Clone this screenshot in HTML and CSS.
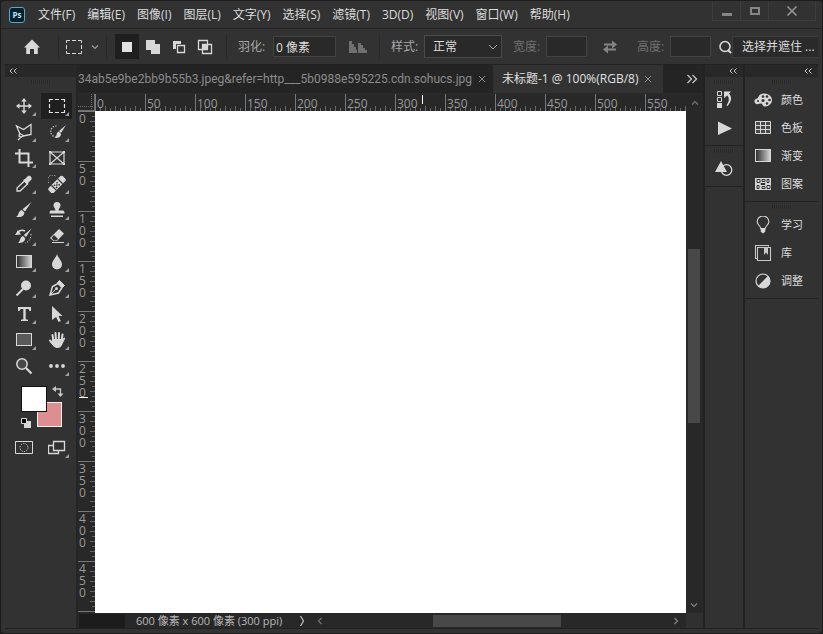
FILE: index.html
```html
<!DOCTYPE html>
<html lang="zh-CN">
<head>
<meta charset="utf-8">
<title>未标题-1</title>
<link rel="stylesheet" href="styles.css">
</head>
<body>
<header class="menubar">
  <svg class="logo" viewBox="0 0 16 16"><rect x="0.5" y="0.5" width="15" height="15" rx="2.5" fill="#04202e" stroke="#5aa9c4"/><text x="8" y="11" text-anchor="middle">Ps</text></svg>
  <nav class="menus">
    <button>文件(F)</button><button>编辑(E)</button><button>图像(I)</button><button>图层(L)</button><button>文字(Y)</button><button>选择(S)</button><button>滤镜(T)</button><button>3D(D)</button><button>视图(V)</button><button>窗口(W)</button><button>帮助(H)</button>
  </nav>
  <div class="winbtns">
    <button aria-label="最小化"><svg viewBox="0 0 12 12"><path d="M1 8h10v3H1z" fill="#858585"/></svg></button>
    <button aria-label="最大化"><svg viewBox="0 0 12 12"><path d="M2 3h8v6H2z" fill="none" stroke="#858585" stroke-width="2"/></svg></button>
    <button class="close" aria-label="关闭"><svg viewBox="0 0 12 12"><path d="M1.500 1.500l9 9M10.500 1.500l-9 9" stroke="#959595" stroke-width="1.600"/></svg></button>
  </div>
</header>

<section class="options">
  <button class="home" aria-label="主页"><svg viewBox="0 0 18 18"><path d="M9 1.500L17 9.500h-2.200V16H11v-5H7v5H3.200V9.500H1z" fill="#d8d8d8"/></svg></button>
  <button class="preset" aria-label="矩形选框"><svg viewBox="0 0 18 18"><path d="M1.500 5V2.500H5M7 2.500h4M13 2.500h3.500V5M16.500 7v4M16.500 13v2.500H13M11 15.500H7M5 15.500H1.500V13M1.500 11V7" fill="none" stroke="#d8d8d8"/></svg><svg class="chev" viewBox="0 0 8 8"><path d="M1 2.500l3 3 3-3" fill="none" stroke="#9a9a9a" stroke-width="1.200"/></svg></button>
  <div class="modes">
    <button class="on" aria-label="新选区"><svg viewBox="0 0 18 18"><path d="M4 4h10v10H4z" fill="#e0e0e0"/></svg></button>
    <button aria-label="添加到选区"><svg viewBox="0 0 18 18"><path d="M2 2h9v4h5v10H7v-4H2z" fill="#d8d8d8"/></svg></button>
    <button aria-label="从选区减去"><svg viewBox="0 0 18 18"><path d="M3 3h8v3H6v5H3z" fill="#d8d8d8"/><path d="M7.500 7.500h7v7h-7z" fill="none" stroke="#d8d8d8" stroke-width="1.300"/></svg></button>
    <button aria-label="与选区交叉"><svg viewBox="0 0 18 18"><path d="M2.500 2.500h9v9h-9zM6.500 6.500h9v9h-9z" fill="none" stroke="#d8d8d8" stroke-width="1.300"/><path d="M7 7h4v4H7z" fill="#d8d8d8"/></svg></button>
  </div>
  <div class="field feather"><label for="feather">羽化:</label><input id="feather" value="0 像素"></div>
  <button class="alias" aria-label="消除锯齿"><svg viewBox="0 0 20 14"><path d="M1 1h3v3h2v3h2v3h1v3H1zM10 3h3v2h2v3h2v2h2v3h-9z" fill="#707070"/></svg></button>
  <div class="field style"><label for="style">样式:</label><select id="style"><option>正常</option></select></div>
  <div class="field size off"><label for="w">宽度:</label><input id="w" disabled></div>
  <button class="swap" aria-label="互换"><svg viewBox="0 0 16 14"><path d="M2 3.500h8V.5l5 4-5 4v-3H2zM14 8.500H6v-3l-5 4 5 4v-3h8z" fill="#858585"/></svg></button>
  <div class="field size off"><label for="h">高度:</label><input id="h" disabled></div>
  <button class="search" aria-label="搜索"><svg viewBox="0 0 14 16"><circle cx="7" cy="7.500" r="5" fill="none" stroke="#dcdcdc" stroke-width="1.500"/><path d="M10 11l3 3" stroke="#dcdcdc" stroke-width="2"/></svg></button>
  <button class="mask">选择并遮住 ...</button>
</section>

<main class="work">
  <aside class="tools">
    <button class="collapse" aria-label="折叠工具"><svg viewBox="0 0 8 6"><path d="M3.500.5L1 3l2.500 2.500M7.500.5L5 3l2.500 2.500" fill="none" stroke="#c8c8c8"/></svg></button>
    <div class="grip"></div>
    <div class="grid">
      <button aria-label="移动"><svg viewBox="0 0 18 18"><path d="M9 3v12M3 9h12" stroke="#d8d8d8" stroke-width="1.400"/><path d="M9 1l2.800 3.500H6.200zM9 17l2.800-3.500H6.200zM1 9l3.500-2.800v5.600zM17 9l-3.500-2.800v5.600z" fill="#d8d8d8"/></svg></button>
      <button class="on" aria-label="矩形选框工具"><svg viewBox="0 0 18 18"><path d="M1.500 5V2.500H5M7 2.500h4M13 2.500h3.500V5M16.500 7v4M16.500 13v2.500H13M11 15.500H7M5 15.500H1.500V13M1.500 11V7" fill="none" stroke="#e0e0e0" stroke-width="1.200"/></svg></button>
      <button aria-label="多边形套索"><svg viewBox="0 0 18 18"><path d="M5 11L1.500 3l7 3.500 7.500-5v10l-8 1.500" fill="none" stroke="#d8d8d8" stroke-width="1.300"/><path d="M4.500 10.500l4 2-2 1.500-2.500-1zM6 14l-3 3" fill="none" stroke="#d8d8d8" stroke-width="1.300"/></svg></button>
      <button aria-label="快速选择"><svg viewBox="0 0 18 18"><path d="M8.500 3A5.500 5.500 0 1 0 8 14" fill="none" stroke="#d8d8d8" stroke-width="1.200" stroke-dasharray="1.200 1.400"/><path d="M18 2l-5 8-2-2zM10.500 8.500l2.500 2.300c0 3-2 4.200-6 4.200 2-1 .8-5 3.500-6.500z" fill="#d8d8d8"/></svg></button>
      <button aria-label="裁剪"><svg viewBox="0 0 18 18"><path d="M4.500 0v13.500H18M0 4.500h13.500V18" fill="none" stroke="#d8d8d8" stroke-width="2"/></svg></button>
      <button class="plain" aria-label="图框"><svg viewBox="0 0 18 18"><path d="M2 3h14v12H2zM2 3l14 12M16 3L2 15" fill="none" stroke="#d8d8d8" stroke-width="1.200"/><path d="M1 2h2v2H1zM15 2h2v2h-2zM1 14h2v2H1zM15 14h2v2h-2z" fill="#d8d8d8"/></svg></button>
      <button aria-label="吸管"><svg viewBox="0 0 18 18"><path d="M9.500 6l3 3-7.500 7H2v-3z" fill="none" stroke="#d8d8d8" stroke-width="1.300"/><path d="M8 5l2-1 3-3c2-1 4.500 1.500 3.500 3.500l-3 3-1 2.500z" fill="#d8d8d8"/></svg></button>
      <button aria-label="污点修复"><svg viewBox="0 0 18 18"><path d="M1 8a4.500 4.500 0 0 1 7-6.500" fill="none" stroke="#d8d8d8" stroke-dasharray="1.200 1.300"/><g transform="rotate(-45 9 9.500)"><rect x="-1" y="6" width="20" height="7" rx="2" fill="#d8d8d8"/><path d="M4.500 6v7M13.500 6v7" stroke="#323232" stroke-width="1.200"/><path d="M6 7.500h1.500V9H6zM9.500 7.500H11V9H9.500zM7.800 9h1.500v1.500H7.800zM6 10.500h1.500V12H6zM9.500 10.500H11V12H9.500z" fill="#323232"/></g></svg></button>
      <button aria-label="画笔"><svg viewBox="0 0 18 18"><path d="M16.500 1L10 10.500 7.500 8.200zM6.800 9l2.600 2.400C9.500 15 6 16.500 1 16c3-1.500 2-6 5.800-7z" fill="#d8d8d8"/></svg></button>
      <button aria-label="仿制图章"><svg viewBox="0 0 18 18"><path d="M7.500 9.500C7.500 7.500 5.500 6.500 5.500 4.500a3.500 3.500 0 0 1 7 0c0 2-2 3-2 5H15c1 0 1.500 1 1.500 3h-15c0-2 .5-3 1.500-3zM3 14.500h12V16H3z" fill="#d8d8d8"/></svg></button>
      <button aria-label="历史记录画笔"><svg viewBox="0 0 18 18"><path d="M16.500 1.500L11 10 8.800 8zM8 9l2.200 2.200C10 15 7 16 3 16c2.500-1.500 1.500-6 5-7zM0 8l3-5 3 4.500z" fill="#d8d8d8"/><path d="M3 5c2-2 5-2 7-1" fill="none" stroke="#d8d8d8" stroke-width="1.500"/><path d="M16 7c0 5-2 8-6 9" fill="none" stroke="#d8d8d8" stroke-dasharray="1.200 1.600"/></svg></button>
      <button aria-label="橡皮擦"><svg viewBox="0 0 18 18"><path d="M11 2l5 4.500-7 7.500H5.500L2 11z" fill="#d8d8d8"/><path d="M6 8l4 4-1.500 1.500H5.800L3.500 11z" fill="#323232"/><path d="M4 15.500h12" stroke="#d8d8d8"/></svg></button>
      <button aria-label="渐变工具"><svg viewBox="0 0 18 18"><defs><linearGradient id="g"><stop stop-color="#292929"/><stop offset="1" stop-color="#d8d8d8"/></linearGradient></defs><rect x="1.500" y="2.500" width="15" height="12" fill="url(#g)" stroke="#d8d8d8"/></svg></button>
      <button aria-label="模糊"><svg viewBox="0 0 18 18"><path d="M9 1c1 4 5 6.500 5 10.500a5 5 0 0 1-10 0C4 7.500 8 5 9 1z" fill="#d8d8d8"/></svg></button>
      <button aria-label="减淡"><svg viewBox="0 0 18 18"><circle cx="11" cy="6.500" r="5" fill="#d8d8d8"/><path d="M8 10l-6.500 6.500" stroke="#d8d8d8" stroke-width="2"/></svg></button>
      <button aria-label="钢笔"><svg viewBox="0 0 18 18"><path d="M2 16L4.500 7.500 10 4.500l4 4L10.500 14z" fill="none" stroke="#d8d8d8" stroke-width="1.500"/><path d="M2.500 15.500L8 10M9.500 3.500l2-2 5 5-2 2z" stroke="#d8d8d8" fill="#d8d8d8"/><circle cx="8.500" cy="9.500" r="1.500" fill="#d8d8d8"/></svg></button>
      <button aria-label="文字工具"><svg viewBox="0 0 18 18"><path d="M3 2h13v4h-1.500L13.500 4H10.700v10.300l2.300.5V16H6v-1.200l2.300-.5V4H5.500l-1 2H3z" fill="#d8d8d8"/></svg></button>
      <button aria-label="路径选择"><svg viewBox="0 0 18 18"><path d="M4 1l10.500 10h-4l2.300 5-2.300 1-2.400-5L4 15z" fill="#d8d8d8"/></svg></button>
      <button aria-label="矩形"><svg viewBox="0 0 18 18"><rect x="1.500" y="2.500" width="15" height="12" fill="#5a5a5a" stroke="#d8d8d8"/></svg></button>
      <button aria-label="抓手"><svg viewBox="0 0 18 18"><path d="M5.500 10L4.500 4M8 9L7.500 2M10.800 9l.2-7M13.500 10l1-6.500M5 13L2 9.500" stroke="#d8d8d8" stroke-width="2" stroke-linecap="round"/><path d="M4.500 8h9.800l2-1.500c1 0 1 1 .5 1.800L14 14c-1 2-2 3-4.500 3C6 17 5 14.500 3 12z" fill="#d8d8d8"/></svg></button>
      <button class="plain" aria-label="缩放"><svg viewBox="0 0 18 18"><circle cx="7" cy="7" r="5.200" fill="#484848" stroke="#d8d8d8" stroke-width="1.500"/><path d="M11 11l5.500 5.500" stroke="#d8d8d8" stroke-width="2.200"/></svg></button>
      <button aria-label="编辑工具栏"><svg viewBox="0 0 18 18"><g fill="#d8d8d8"><circle cx="3" cy="9" r="1.900"/><circle cx="9" cy="9" r="1.900"/><circle cx="15" cy="9" r="1.900"/></g></svg></button>
    </div>
    <div class="swatches">
      <button class="back" aria-label="背景色"></button><button class="fore" aria-label="前景色"></button>
      <button class="flip" aria-label="切换颜色"><svg viewBox="0 0 12 12"><path d="M3 4h5.500v5" fill="none" stroke="#c8c8c8" stroke-width="1.300"/><path d="M0 4l4-3v6zM8.500 12L5.500 8.500h6z" fill="#c8c8c8"/></svg></button>
      <button class="reset" aria-label="默认颜色"><svg viewBox="0 0 12 12"><path d="M4 4h7v7H4z" fill="#d8d8d8"/><path d="M1.500 1.500h5v5h-5z" fill="#000" stroke="#d8d8d8"/></svg></button>
    </div>
    <div class="grid">
      <button class="plain" aria-label="快速蒙版"><svg viewBox="0 0 18 18"><path d="M.5 2.500h17v12H.5z" fill="none" stroke="#d8d8d8"/><circle cx="9" cy="8.500" r="4" fill="none" stroke="#d8d8d8" stroke-dasharray="1.200 1.300"/></svg></button>
      <button aria-label="屏幕模式"><svg viewBox="0 0 18 18"><path d="M.5 6.500h10v8H.5z" fill="none" stroke="#d8d8d8" stroke-width="1.300"/><path d="M5.500 2.500h11v9h-11z" fill="#323232" stroke="#d8d8d8" stroke-width="1.300"/></svg></button>
    </div>
  </aside>

  <section class="doc">
    <div class="tabs">
      <div class="tab first"><span>34ab5e9be2bb9b55b3.jpeg&amp;refer=http___5b0988e595225.cdn.sohucs.jpg</span><button aria-label="关闭标签"><svg viewBox="0 0 8 8"><path d="M1 1l6 6M7 1L1 7" stroke="#8a8a8a"/></svg></button></div>
      <div class="tab active"><span>未标题-1 @ 100%(RGB/8)</span><button aria-label="关闭标签"><svg viewBox="0 0 8 8"><path d="M1 1l6 6M7 1L1 7" stroke="#8a8a8a"/></svg></button></div>
      <button class="more" aria-label="更多标签"><svg viewBox="0 0 12 10"><path d="M1.500 1l4 4-4 4M6.500 1l4 4-4 4" fill="none" stroke="#c8c8c8" stroke-width="1.300"/></svg></button>
    </div>
    <div class="view">
      <div class="corner"></div>
      <div class="hruler"><span>0</span><span>50</span><span>100</span><span>150</span><span>200</span><span>250</span><span>300</span><span>350</span><span>400</span><span>450</span><span>500</span><span>550</span><i class="mark"></i></div>
      <button class="arrow" aria-label="向上滚动"><svg viewBox="0 0 8 8"><path d="M1 5.500l3-3 3 3" fill="none" stroke="#757575" stroke-width="1.200"/></svg></button>
      <div class="vruler"><span>0</span><span>50</span><span>100</span><span>150</span><span>200</span><span>250</span><span>300</span><span>350</span><span>400</span><span>450</span><span></span><i class="mark"></i></div>
      <div class="canvas"></div>
      <div class="vscroll"><div class="room"></div><div class="thumb"></div><div class="rest"></div><button class="arrow" aria-label="向下滚动"><svg viewBox="0 0 8 8"><path d="M1 2.500l3 3 3-3" fill="none" stroke="#858585" stroke-width="1.200"/></svg></button></div>
    </div>
    <div class="status">
      <div class="zoom"></div>
      <span class="info">600 像素 x 600 像素 (300 ppi)</span>
      <button aria-label="状态信息"><svg viewBox="0 0 8 10"><path d="M2.500 0l3 5-3 5" fill="none" stroke="#c0c0c0" stroke-width="1.200"/></svg></button>
      <div class="hscroll"><button aria-label="向左滚动"><svg viewBox="0 0 8 8"><path d="M5.500 1l-3 3 3 3" fill="none" stroke="#757575" stroke-width="1.200"/></svg></button><div class="room"></div><div class="thumb"></div><div class="rest"></div><button aria-label="向右滚动"><svg viewBox="0 0 8 8"><path d="M2.500 1l3 3-3 3" fill="none" stroke="#858585" stroke-width="1.200"/></svg></button></div>
      <div class="end"></div>
    </div>
  </section>

  <aside class="dock icons">
    <button class="collapse" aria-label="展开面板"><svg viewBox="0 0 8 6"><path d="M3.500.5L1 3l2.500 2.500M7.500.5L5 3l2.500 2.500" fill="none" stroke="#c8c8c8"/></svg></button>
    <div class="group"><div class="grip"></div>
      <button aria-label="历史记录"><svg viewBox="0 0 18 18"><path d="M2.500.5h4v4h-4zM2.500 6.500h4v4h-4z" fill="none" stroke="#d8d8d8"/><path d="M2 12h5v5H2zM9 .5h7l-2 2c3 3 3 8-1.500 12.500l-1-.8c3-4 3-7 .8-9.700L9 7z" fill="#d8d8d8"/></svg></button>
      <button aria-label="动作"><svg viewBox="0 0 18 18"><path d="M3 2.500L17 9.500 3 16z" fill="#d8d8d8"/></svg></button>
    </div>
    <div class="group"><div class="grip"></div>
      <button aria-label="形状"><svg viewBox="0 0 18 18"><circle cx="11.500" cy="10" r="5.300" fill="none" stroke="#d8d8d8" stroke-width="1.300"/><path d="M6 1l6 11H0z" fill="#d8d8d8"/></svg></button>
    </div>
  </aside>

  <aside class="dock names">
    <button class="collapse" aria-label="展开面板"><svg viewBox="0 0 8 6"><path d="M3.500.5L1 3l2.500 2.500M7.500.5L5 3l2.500 2.500" fill="none" stroke="#c8c8c8"/></svg></button>
    <div class="group"><div class="grip"></div>
      <button><svg viewBox="0 0 18 18"><path d="M10 2.500c5 0 8 3 8 6.500s-3 6.500-7 6.500c-3 0-2-3-4-3-1.500 0-4 1.500-5.500 0C-.5 10.500.5 8 3 7.500c2-.4 1-5 7-5z" fill="#d8d8d8"/><g fill="#323232"><circle cx="9" cy="5.500" r="1.300"/><circle cx="13" cy="5.500" r="1.300"/><circle cx="15.500" cy="9" r="1.300"/><circle cx="13" cy="12.500" r="1.300"/><circle cx="9" cy="9.500" r="1.500"/><circle cx="4" cy="10" r="1"/></g></svg>颜色</button>
      <button><svg viewBox="0 0 18 18"><path d="M1.500 2.500h15v12h-15zM1.500 6.500h15M1.500 10.500h15M6.500 2.500v12M11.500 2.500v12" fill="#474747" stroke="#d8d8d8"/></svg>色板</button>
      <button><svg viewBox="0 0 18 18"><rect x="1.500" y="2.500" width="15" height="12" fill="url(#g)" stroke="#d8d8d8"/></svg>渐变</button>
      <button><svg viewBox="0 0 18 18"><path d="M1 3h16v12H1z" fill="#d8d8d8"/><path d="M3 4.500h3v3H3zM8 4.500h3v2H8zM13 4.500h2v3h-2zM3 10.500h2v3H3zM7 8.500h4v1H7zM8 11.500h3v2H8zM13 10.500h3v3h-3z" stroke="#323232" fill="none"/></svg>图案</button>
    </div>
    <div class="group"><div class="grip"></div>
      <button><svg viewBox="0 0 18 20"><path d="M6.500 14c0-3-4-4-4-7.500a6.500 6.500 0 0 1 13 0c0 3.500-4 4.500-4 7.500z" fill="none" stroke="#d8d8d8" stroke-width="1.200"/><path d="M6.500 14h5v3.500L9 19.500l-2.500-2z" fill="#d8d8d8"/></svg>学习</button>
      <button><svg viewBox="0 0 18 18"><path d="M3.500 14.500h-2v-13h13v1M3.500 3.500h13v13h-13z" fill="none" stroke="#c8c8c8" stroke-width="1.100"/><path d="M10 4h4v7l-2-2.500-2 2.500z" fill="#c8c8c8"/></svg>库</button>
      <button><svg viewBox="0 0 18 18"><circle cx="9" cy="9" r="7" fill="none" stroke="#d8d8d8" stroke-width="1.200"/><path d="M14 4a7 7 0 0 1-10 10z" fill="#d8d8d8"/></svg>调整</button>
    </div>
  </aside>
</main>
</body>
</html>
```
FILE: styles.css
```css
* { box-sizing: border-box; }

body {
  margin: 0;
  height: 100vh;
  overflow: hidden;
  display: flex;
  flex-direction: column;
  border: 1px solid #1c1c1c;
  border-radius: 4px;
  background: #323232;
  color: #dcdcdc;
  font: 12px/16px "Open Sans", "Noto Sans CJK SC", sans-serif;
}

html { background: #1c1c1c; }

button, input, select {
  font: inherit;
  color: inherit;
  background: none;
  border: 0;
  padding: 0;
  margin: 0;
}

button { display: flex; align-items: center; justify-content: center; flex: none; }
svg { display: block; width: 18px; height: 18px; flex: none; }

/* menu bar */
.menubar { display: flex; align-items: center; height: 28px; padding-left: 8px; border-bottom: 1px solid #222; flex: none; }
.logo { width: 16px; height: 16px; }
.logo text { font: bold 8px "Open Sans", sans-serif; fill: #b9e6f5; }
.menus { display: flex; gap: 12px; margin-left: 13px; white-space: nowrap; }
.winbtns { display: flex; align-self: flex-start; margin-left: auto; margin-right: 6px; border: 1px solid #3d3d3d; border-top: 0; }
.winbtns button { width: 28px; height: 19px; border-right: 1px solid #3d3d3d; }
.winbtns .close { width: 46px; border: 0; }
.winbtns svg { width: 12px; height: 12px; }

/* options bar */
.options { display: flex; align-items: center; height: 36px; margin: 0 4px; border-bottom: 1px solid #222; flex: none; white-space: nowrap; }
.home { width: 54px; height: 24px; border-right: 1px solid #292929; }
.preset { width: 48px; height: 24px; gap: 8px; padding-right: 2px; border-right: 1px solid #292929; }
.chev { width: 8px; height: 8px; }
.modes { display: flex; gap: 2px; padding: 0 9px 0 8px; border-right: 1px solid #292929; }
.modes button { width: 24px; height: 25px; }
.modes .on { background: #1f1f1f; }
.field { display: flex; align-items: center; gap: 6px; color: #a8a8a8; }
.field label { width: 29px; }
.field input { height: 21px; padding: 0 2px; background: #292929; border: 1px solid #434343; color: #dedede; }
.feather { margin-left: 11px; }
.feather input { width: 63px; }
.alias { width: 44px; height: 24px; border-right: 1px solid #292929; }
.alias svg { width: 20px; height: 14px; }
.style { margin-left: 11px; gap: 4px; }
.style select {
  width: 78px;
  height: 23px;
  padding: 0 8px;
  appearance: none;
  border: 1px solid #4a4a4a;
  color: #dedede;
  background:
    linear-gradient(45deg, transparent 46%, #aaa 46%, #aaa 58%, transparent 58%) right 8px center / 4px 4px no-repeat,
    linear-gradient(-45deg, transparent 46%, #aaa 46%, #aaa 58%, transparent 58%) right 4px center / 4px 4px no-repeat,
    #292929;
}
.off { color: #707070; gap: 4px; margin-left: 11px; }
.size input { width: 41px; }
.swap { width: 38px; margin-left: 4px; }
.swap svg { width: 16px; height: 14px; }
.swap + .off { margin-left: 8px; }
.search { margin-left: 7px; }
.search svg { width: 14px; height: 16px; }
.mask { flex: 1; height: 22px; padding-left: 9px; justify-content: flex-start; background: #2a2a2a; border: 1px solid #3d3d3d; border-right: 0; }

/* workspace */
.work { display: flex; flex: 1; min-height: 0; margin: 0 4px 4px; border-bottom: 1px solid #222; }
.collapse { width: 100%; height: 12px; background: #282828; }
.collapse svg { width: 8px; height: 6px; }
.grip { width: 20px; height: 4px; margin: 3px auto 0; background: repeating-linear-gradient(90deg, #282828 0 1px, #363636 1px 2px); }

/* toolbar */
.tools { width: 73px; flex: none; border-right: 2px solid #252525; }
.tools .collapse { justify-content: flex-start; padding-left: 4px; }
.grid { display: grid; grid-template-columns: 31px 31px; column-gap: 2px; grid-auto-rows: 26px; margin: 9px 0 0 3px; }
.grid button { position: relative; }
.grid .on { background: #1f1f1f; }
.grid button:not(.plain)::after {
  content: "";
  position: absolute;
  right: 3px;
  bottom: 3px;
  border: 2px solid;
  border-color: transparent #a0a0a0 #a0a0a0 transparent;
}
.swatches { position: relative; height: 50px; margin-top: 3px; }
.swatches button { position: absolute; }
.fore { left: 16px; top: 4px; width: 26px; height: 26px; background: #fff; border: 1px solid #111; }
.back { left: 32px; top: 20px; width: 25px; height: 25px; background: #dc8e90; border: 1px solid #f0f0f0; }
.flip { left: 47px; top: 3px; }
.reset { left: 15px; top: 35px; }
.swatches svg { width: 12px; height: 12px; }
.swatches + .grid { margin-top: 3px; }

/* document */
.doc { display: flex; flex-direction: column; flex: 1; min-width: 0; }
.tabs { display: flex; height: 29px; background: #242424; border-bottom: 1px solid #2a2a2a; flex: none; white-space: nowrap; }
.tab { display: flex; align-items: center; gap: 6px; padding: 0 10px 0 8px; color: #8c8c8c; }
.tab button, .tab svg { width: 8px; height: 8px; }
.tab.first { width: 415px; padding-left: 0; justify-content: space-between; font-family: Roboto, "Noto Sans CJK SC", sans-serif; }
.tab.active { background: #323232; color: #e0e0e0; padding: 0 11px 0 9px; }
.more { margin-left: auto; padding-right: 5px; }
.more svg { width: 12px; height: 10px; }
.view { display: grid; grid-template: 17px minmax(0, 1fr) / 17px minmax(0, 1fr) 17px; flex: 1; min-height: 0; }
.view, .status { background: #282828; }
.hruler, .vruler { position: relative; display: flex; overflow: hidden; color: #999; line-height: 12px; }
.corner {
  background:
    repeating-linear-gradient(90deg, #707070 0 1px, transparent 1px 2px) 0 12px / 100% 1px no-repeat,
    repeating-linear-gradient(#707070 0 1px, transparent 1px 2px) 13px 0 / 1px 100% no-repeat;
  border-right: 1px solid #707070;
  border-bottom: 1px solid #707070;
}
.hruler { background: repeating-linear-gradient(90deg, #686868 0 1px, transparent 1px 10px) 0 100% / 100% 5px no-repeat, repeating-linear-gradient(90deg, #686868 0 1px, transparent 1px 5px) 0 100% / 100% 3px no-repeat; }
.hruler span { flex: none; width: 50px; padding: 4px 0 0 1px; border-left: 1px solid #787878; }
.vruler { flex-direction: column; background: repeating-linear-gradient(#686868 0 1px, transparent 1px 10px) 100% 0 / 5px 100% no-repeat, repeating-linear-gradient(#686868 0 1px, transparent 1px 5px) 100% 0 / 3px 100% no-repeat; }
.vruler span { flex: none; height: 50px; padding: 1px 9px 0 1px; border-top: 1px solid #787878; word-break: break-all; }
.mark { position: absolute; background: #fff; }
.hruler .mark { left: 327px; top: 1px; width: 1px; height: 9px; }
.vruler .mark { left: 1px; top: 286px; width: 9px; height: 1px; }
.canvas { background: #fff; }
.arrow { height: 17px; }
.arrow svg, .status svg { width: 8px; height: 8px; }
.vscroll { display: flex; flex-direction: column; padding: 0 3px 0 2px; }
.thumb { background: #484848; }
.vscroll .room { flex: 138; }
.vscroll .thumb { flex: 174; }
.vscroll .rest { flex: 173; }
.status { display: flex; height: 15px; flex: none; white-space: nowrap; color: #b8b8b8; }
.zoom { width: 46px; margin: 1px 0 0 1px; background: #1c1c1c; }
.info { margin: 0 14px 0 11px; font-size: 11px; }
.status .info + button svg { height: 10px; }
.status button { width: 12px; }
.hscroll { display: flex; flex: 1; margin-left: 6px; padding: 2px 4px 1px 0; }
.hscroll .room { flex: 107; }
.hscroll .thumb { flex: 128; }
.hscroll .rest { flex: 109; }
.end { width: 17px; background: #303030; }

/* panels */
.dock { flex: none; border-left: 2px solid #222; }
.dock .collapse { justify-content: flex-end; padding-right: 6px; }
.icons { width: 40px; }
.names { width: 75px; }
.group { border-bottom: 1px solid #222; padding-bottom: 3px; }
.group button { width: 100%; height: 28px; }
.group .grip + button { margin-top: 2px; }
.names .group button { justify-content: flex-start; gap: 9px; padding-left: 9px; font-size: 11px; }
```
